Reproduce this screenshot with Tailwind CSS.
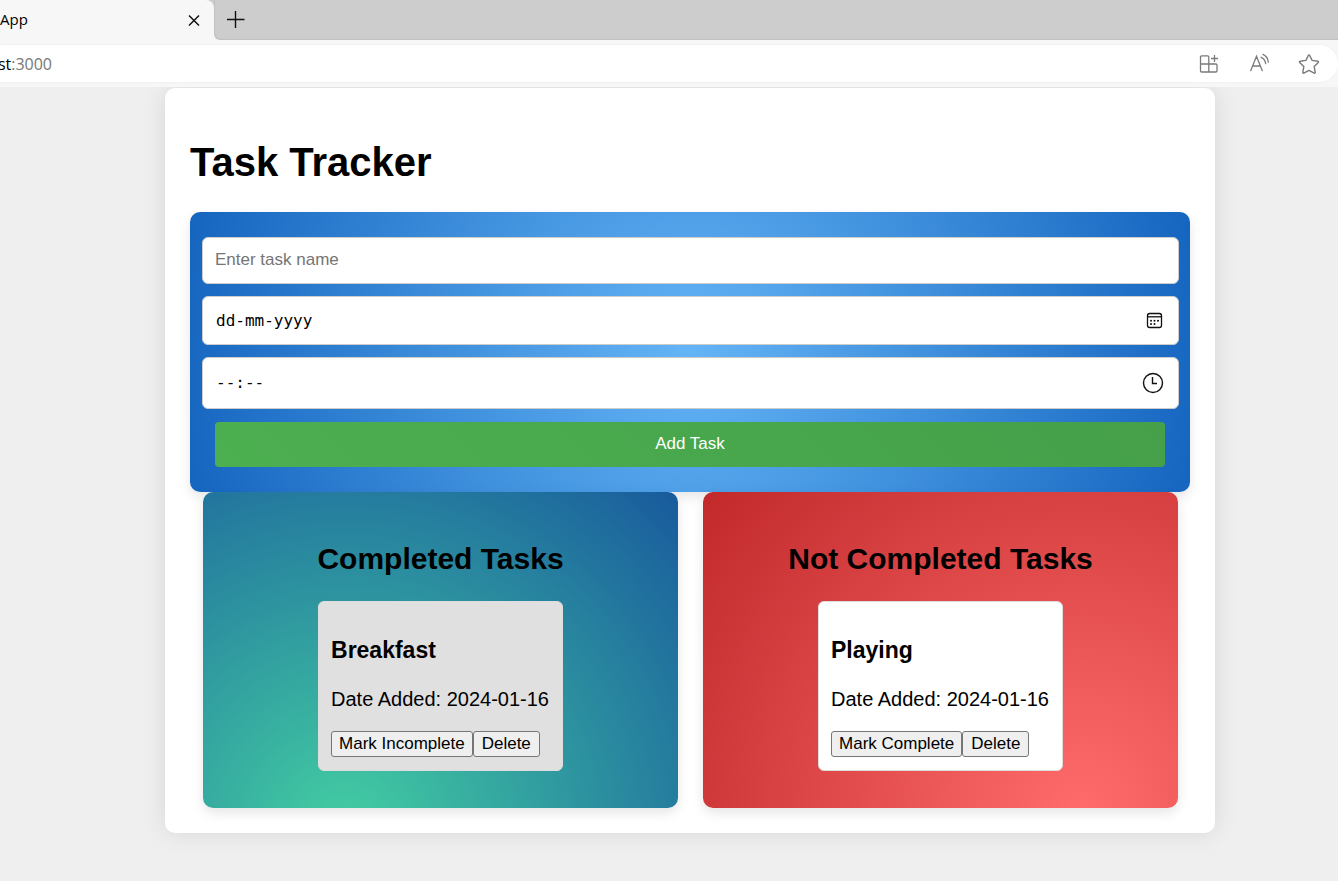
<!DOCTYPE html>
<html lang="en">
<head>
<meta charset="utf-8">
<title>Task Tracker</title>
<script src="https://cdn.jsdelivr.net/npm/@tailwindcss/browser@4"></script>
</head>
<body class="flex min-h-screen flex-col overflow-x-hidden bg-[#efefef] font-['Liberation_Sans',Arial,sans-serif] text-black">
  <!-- Browser chrome -->
  <header class="relative z-10 bg-[#f7f7f7] font-['Open_Sans','Noto_Sans',sans-serif]">
    <div class="flex h-10 bg-[#f7f7f7]">
      <div class="w-[214px] shrink-0 bg-[#cdcdcd]">
        <div class="flex h-10 items-center justify-between rounded-tr-lg bg-[#f7f7f7] pr-3">
          <span class="pb-px text-[15px]">App</span>
          <button type="button" aria-label="Close tab" class="flex size-4 items-center justify-center">
            <svg class="size-4" viewBox="0 0 16 16" fill="none" stroke="#111" stroke-width="1.5"><path d="M3 3.5l10 10M13 3.5l-10 10"/></svg>
          </button>
        </div>
      </div>
      <div class="flex flex-1 items-center rounded-bl-md bg-[#cdcdcd] pl-3 shadow-[inset_1px_-1px_1px_rgba(0,0,0,0.06)]">
        <button type="button" aria-label="New tab" class="flex size-5 items-center justify-center">
          <svg class="size-5" viewBox="0 0 20 20" fill="none" stroke="#111" stroke-width="1.4"><path d="M1 9.5h17.500M9.500 1v17"/></svg>
        </button>
      </div>
    </div>
    <div class="pt-[5px] pb-[5px]">
      <div class="flex h-[37px] items-center justify-between rounded-r-full bg-white pr-[18px] shadow-[0_0_3px_rgba(0,0,0,0.06)]">
        <div class="flex w-[52px] justify-end text-base"><span>st</span><span class="text-[#767676]">:3000</span></div>
        <div class="flex items-center gap-7 text-[#7a7a7a]">
          <button type="button" aria-label="Apps">
            <svg class="size-[22px]" viewBox="0 0 22 22" fill="none" stroke="currentColor" stroke-width="1.300"><path d="M10.800 19V4a1.200 1.200 0 0 0-1.200-1.200H3.700A1.200 1.200 0 0 0 2.500 4v13.800A1.200 1.200 0 0 0 3.700 19h14.100a1.200 1.200 0 0 0 1.200-1.200v-5.600a1.200 1.200 0 0 0-1.200-1.200H2.500M16.500 2v7M13 5.500h7"/></svg>
          </button>
          <button type="button" aria-label="Read aloud">
            <svg class="size-[22px]" viewBox="0 0 22 22" fill="none" stroke="currentColor" stroke-width="1.300" stroke-linecap="round"><path d="M2.700 17.700L8.500 3.200l5.800 14.500M4.700 13h7.600M13.200 4.300c2.700 1.200 4.200 3.500 4.500 6.400M14.900 1.400c3.400 1.500 5.200 4.300 5.400 7.900"/></svg>
          </button>
          <button type="button" aria-label="Add to favourites">
            <svg class="size-[22px]" viewBox="0 0 22 22" fill="none" stroke="currentColor" stroke-width="1.400" stroke-linejoin="round"><path d="M10.400 2.300a.7.7 0 0 1 1.200 0l2.500 5.100 5.800.9a.7.7 0 0 1 .4 1.200l-4.100 4.100 1 5.700a.7.7 0 0 1-1 .8L11 17.400l-5.200 2.700a.7.7 0 0 1-1-.8l1-5.700-4.100-4.100a.7.7 0 0 1 .4-1.200l5.800-.9z"/></svg>
          </button>
        </div>
      </div>
    </div>
  </header>

  <main class="flex flex-1 items-start justify-center bg-[#efefef] pt-px pl-[42px]">
    <div class="w-full max-w-[1050px] rounded-[10px] bg-white px-[25px] pt-[51px] pb-[25px] shadow-[0_0_25px_rgba(0,0,0,0.1)]">
      <h1 class="mb-[27px] text-[40px] leading-[46px] font-bold">Task Tracker</h1>

      <form class="flex flex-col gap-3 rounded-[10px] bg-[radial-gradient(circle,#64b5f6,#1565c0)] py-[25px] pr-[11px] pl-3 shadow-[0_5px_12px_rgba(0,0,0,0.1)]">
        <input type="text" aria-label="Task name" placeholder="Enter task name" class="h-[47px] w-full rounded-md border border-[#ccc] bg-white px-3 pb-0.5 text-[17px] placeholder:text-[#757575]">
        <div class="flex h-[49px] items-center rounded-md border border-[#ccc] bg-white pr-[15px] pl-[13px]">
          <input type="text" aria-label="Date" placeholder="dd-mm-yyyy" class="min-w-0 flex-1 bg-transparent font-['DejaVu_Sans_Mono',monospace] text-base placeholder:text-black">
          <button type="button" aria-label="Open date picker">
            <svg class="size-[17px]" viewBox="0 0 17 17" fill="none" stroke="#111" stroke-width="1.300"><rect x="1.500" y="1.500" width="14" height="14" rx="2.200"/><path d="M1.500 4.800h14"/><g fill="#111" stroke="none"><circle cx="5" cy="8.800" r="1"/><circle cx="8.500" cy="8.800" r="1"/><circle cx="12" cy="8.800" r="1"/><circle cx="5" cy="12" r="1"/><circle cx="8.500" cy="12" r="1"/></g></svg>
          </button>
        </div>
        <div class="flex h-[52px] items-center rounded-md border border-[#ccc] bg-white pr-3.5 pl-[13px]">
          <input type="text" aria-label="Time" placeholder="--:--" class="min-w-0 flex-1 bg-transparent font-['DejaVu_Sans_Mono',monospace] text-base placeholder:text-black">
          <button type="button" aria-label="Open time picker">
            <svg class="size-[22px]" viewBox="0 0 22 22" fill="none" stroke="#111" stroke-width="1.400"><circle cx="11" cy="11" r="9.500"/><path d="M10.500 5v6.500H15"/></svg>
          </button>
        </div>
        <button type="submit" class="mt-px mr-3.5 ml-[13px] h-[45px] rounded bg-[linear-gradient(45deg,#4caf50,#45a049)] pb-0.5 text-[17px] text-white">Add Task</button>
      </form>

      <div class="grid grid-cols-2 gap-[25px] pr-3 pl-[13px]">
        <section class="flex flex-col items-center rounded-[10px] bg-[radial-gradient(circle_at_30%_107%,#43cea2,#185a9d)] pt-[50px] pb-[37px] shadow-[0_5px_12px_rgba(0,0,0,0.1)]">
          <h2 class="mb-[25px] text-[30px] leading-[34px] font-bold">Completed Tasks</h2>
          <article class="rounded-md border border-[#ddd] bg-[#e0e0e0] pt-[35px] pr-[13px] pb-[13px] pl-3">
            <h3 class="mb-6 text-[23px] leading-[27px] font-bold">Breakfast</h3>
            <p class="mb-5 text-xl leading-[23px]">Date Added: 2024-01-16</p>
            <div class="flex">
              <button type="button" class="h-[26px] rounded-[3px] border border-[#767676] bg-[#efefef] px-[7px] pb-0.5 text-[17px] leading-none">Mark Incomplete</button>
              <button type="button" class="h-[26px] rounded-[3px] border border-[#767676] bg-[#efefef] px-2 pb-0.5 text-[17px] leading-none">Delete</button>
            </div>
          </article>
        </section>

        <section class="flex flex-col items-center rounded-[10px] bg-[radial-gradient(circle_at_80%_100%,#ff6b6b,#c1292b)] pt-[50px] pb-[37px] shadow-[0_5px_12px_rgba(0,0,0,0.1)]">
          <h2 class="mb-[25px] text-[30px] leading-[34px] font-bold">Not Completed Tasks</h2>
          <article class="rounded-md border border-[#ddd] bg-white pt-[35px] pr-[13px] pb-[13px] pl-3">
            <h3 class="mb-6 text-[23px] leading-[27px] font-bold">Playing</h3>
            <p class="mb-5 text-xl leading-[23px]">Date Added: 2024-01-16</p>
            <div class="flex">
              <button type="button" class="h-[26px] rounded-[3px] border border-[#767676] bg-[#efefef] px-[7px] pb-0.5 text-[17px] leading-none">Mark Complete</button>
              <button type="button" class="h-[26px] rounded-[3px] border border-[#767676] bg-[#efefef] px-2 pb-0.5 text-[17px] leading-none">Delete</button>
            </div>
          </article>
        </section>
      </div>
    </div>
  </main>
</body>
</html>
